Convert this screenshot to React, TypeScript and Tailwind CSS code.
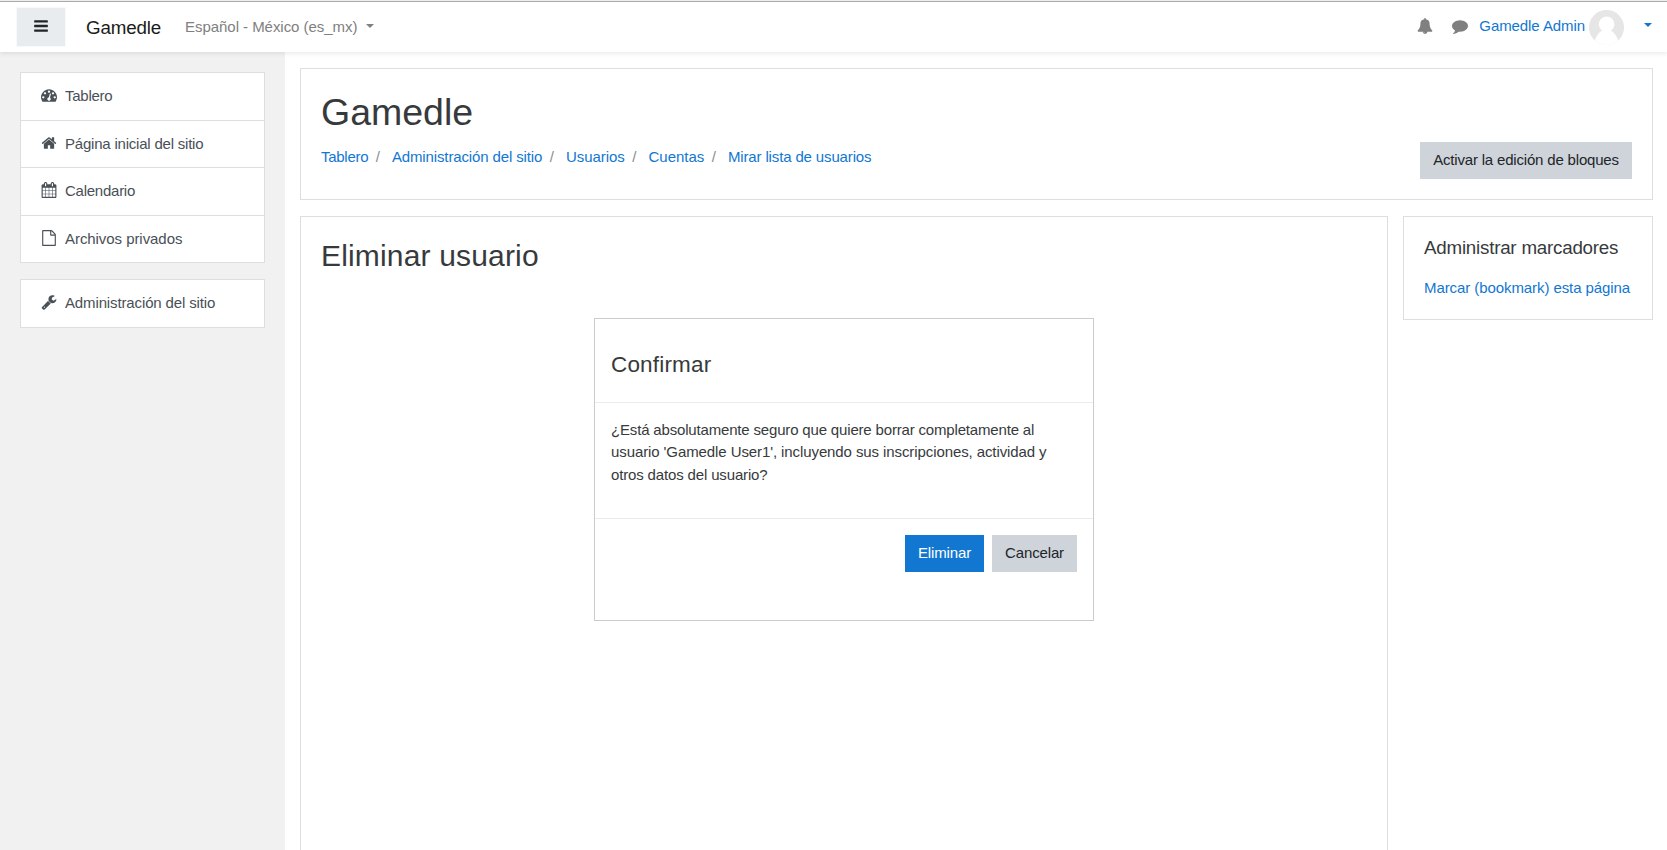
import React from "react";

const ICONS = {
  bars: "M1664 1344v128q0 26-19 45t-45 19h-1408q-26 0-45-19t-19-45v-128q0-26 19-45t45-19h1408q26 0 45 19t19 45zm0-512v128q0 26-19 45t-45 19h-1408q-26 0-45-19t-19-45v-128q0-26 19-45t45-19h1408q26 0 45 19t19 45zm0-512v128q0 26-19 45t-45 19h-1408q-26 0-45-19t-19-45v-128q0-26 19-45t45-19h1408q26 0 45 19t19 45z",
  dashboard:
    "M384 1152q0-53-37.5-90.5t-90.5-37.5-90.5 37.5-37.5 90.5 37.5 90.5 90.5 37.5 90.5-37.5 37.5-90.5zm192-448q0-53-37.5-90.5t-90.5-37.5-90.5 37.5-37.5 90.5 37.5 90.5 90.5 37.5 90.5-37.5 37.5-90.5zm428 481l101-382q6-26-7.5-48.5t-38.5-29.5-48 6.5-30 39.5l-101 382q-60 5-107 43.5t-63 98.5q-20 77 20 146t117 89 146-20 89-117q16-60-6-117t-72-91zm660-33q0-53-37.5-90.5t-90.5-37.5-90.5 37.5-37.5 90.5 37.5 90.5 90.5 37.5 90.5-37.5 37.5-90.5zm-640-640q0-53-37.5-90.5t-90.5-37.5-90.5 37.5-37.5 90.5 37.5 90.5 90.5 37.5 90.5-37.5 37.5-90.5zm448 192q0-53-37.5-90.5t-90.5-37.5-90.5 37.5-37.5 90.5 37.5 90.5 90.5 37.5 90.5-37.5 37.5-90.5zm320 448q0 261-141 483-19 29-54 29h-1402q-35 0-54-29-141-221-141-483 0-182 71-348t191-286 286-191 348-71 348 71 286 191 191 286 71 348z",
  home: "M1472 992v480q0 26-19 45t-45 19h-384v-384h-256v384h-384q-26 0-45-19t-19-45v-480q0-1 .5-3t.5-3l575-474 575 474q1 2 1 6zm223-69l-62 74q-8 9-21 11h-3q-13 0-21-7l-692-577-692 577q-12 8-24 7-13-2-21-11l-62-74q-8-10-7-23.5t11-21.5l719-599q32-26 76-26t76 26l244 204v-195q0-14 9-23t23-9h192q14 0 23 9t9 23v408l219 182q10 8 11 21.5t-7 23.5z",
  calendar:
    "M192 1664h288v-288h-288v288zm352 0h320v-288h-320v288zm-352-352h288v-320h-288v320zm352 0h320v-320h-320v320zm-352-384h288v-288h-288v288zm736 736h320v-288h-320v288zm-384-736h320v-288h-320v288zm768 736h288v-288h-288v288zm-384-352h320v-320h-320v320zm-352-864v-288q0-13-9.500-22.500t-22.500-9.500h-64q-13 0-22.500 9.500t-9.500 22.500v288q0 13 9.500 22.500t22.500 9.500h64q13 0 22.500-9.500t9.500-22.500zm736 864h288v-320h-288v320zm-384-384h320v-288h-320v288zm384 0h288v-288h-288v288zm32-480v-288q0-13-9.500-22.500t-22.500-9.500h-64q-13 0-22.500 9.500t-9.500 22.500v288q0 13 9.500 22.500t22.500 9.500h64q13 0 22.500-9.500t9.500-22.500zm384-64v1280q0 52-38 90t-90 38h-1408q-52 0-90-38t-38-90v-1280q0-52 38-90t90-38h128v-96q0-66 47-113t113-47h64q66 0 113 47t47 113v96h384v-96q0-66 47-113t113-47h64q66 0 113 47t47 113v96h128q52 0 90 38t38 90z",
  file: "M1596 380q28 28 48 76t20 88v1152q0 40-28 68t-68 28h-1344q-40 0-68-28t-28-68v-1600q0-40 28-68t68-28h896q40 0 88 20t76 48zm-444-244v376h376q-10-29-22-41l-313-313q-12-12-41-22zm384 1528v-1024h-416q-40 0-68-28t-28-68v-416h-768v1536h1280z",
  wrench:
    "M448 1472q0-26-19-45t-45-19-45 19-19 45 19 45 45 19 45-19 19-45zm644-420l-682 682q-37 37-90 37-52 0-91-37l-106-108q-38-36-38-90 0-53 38-91l681-681q39 98 114.5 173.5t173.5 114.5zm634-435q0 39-23 106-47 134-164.5 217.5t-258.5 83.5q-185 0-316.5-131.5t-131.5-316.500 131.500-316.500 316.500-131.500q58 0 121.500 16.500t107.500 46.500q16 11 16 28t-16 28l-293 169v224l193 107q5-3 79-48.500t135.500-81 70.500-35.500q15 0 23.500 10t8.500 25z",
  bell: "M912 1696q0-16-16-16-59 0-101.500-42.500t-42.500-101.500q0-16-16-16t-16 16q0 73 51.500 124.500t124.500 51.500q16 0 16-16zm816-288q0 52-38 90t-90 38h-448q0 106-75 181t-181 75-181-75-75-181h-448q-52 0-90-38t-38-90q50-42 91-88t85-119.500 74.500-158.500 50-206 19.500-260q0-152 117-282.500t307-158.500q-8-19-8-39 0-40 28-68t68-28 68 28 28 68q0 20-8 39 190 28 307 158.500t117 282.500q0 139 19.500 260t50 206 74.500 158.500 85 119.500 91 88z",
  comment:
    "M1792 896q0 174-120 321.500t-326 233-450 85.500q-70 0-145-8-198 175-460 242-49 14-114 22-17 2-30.500-9t-17.500-29v-1q-3-4-.5-12t2-10 4.500-9.500l6-9 7-8.500 8-9q7-8 31-34.500t34.500-38 31-39.500 32.500-51 27-59 26-76q-157-89-247.500-220t-90.500-281q0-130 71-248.500t191-204.500 286-136.500 348-50.500 348 50.500 286 136.500 191 204.500 71 248.500z",
};

type IconName = keyof typeof ICONS;

function Icon({ name, className = "" }: { name: IconName; className?: string }) {
  return (
    <svg viewBox="0 0 1792 1792" className={`size-4 shrink-0 fill-current ${className}`} aria-hidden="true">
      <path d={ICONS[name]} />
    </svg>
  );
}

function Caret({ className = "" }: { className?: string }) {
  return (
    <span
      className={`inline-block h-0 w-0 border-x-[4px] border-t-[4px] border-x-transparent border-t-current ${className}`}
    />
  );
}

function Avatar() {
  return (
    <svg viewBox="0 0 35 35" className="size-[35px] shrink-0" aria-hidden="true">
      <defs>
        <clipPath id="avatar-circle">
          <circle cx="17.5" cy="17.5" r="17.5" />
        </clipPath>
      </defs>
      <g clipPath="url(#avatar-circle)">
        <rect width="35" height="35" fill="#e6e6e6" />
        <circle cx="17.6" cy="14.3" r="7.8" fill="#fff" />
        <path d="M5.500 35V31.500C6.800 26.500 9.500 22.700 13 20.500H22C25.500 22.700 28.200 26.500 29.500 31.500V35Z" fill="#fff" />
      </g>
    </svg>
  );
}

interface NavItemProps {
  icon: IconName;
  label: string;
  height: string;
  tracking: string;
}

function NavItem({ icon, label, height, tracking }: NavItemProps) {
  return (
    <a href="#" className={`flex items-center border-t border-[#dedede] bg-white pl-5 text-[#495057] ${height}`}>
      <Icon name={icon} className="mb-[3px]" />
      <span className={`ml-2 ${tracking}`}>{label}</span>
    </a>
  );
}

const CRUMBS = [
  { label: "Tablero", tracking: "tracking-[-0.28px]" },
  { label: "Administración del sitio", tracking: "tracking-[-0.13px]" },
  { label: "Usuarios", tracking: "tracking-[-0.03px]" },
  { label: "Cuentas", tracking: "tracking-[-0.02px]" },
  { label: "Mirar lista de usuarios", tracking: "tracking-[-0.14px]" },
];

export default function App() {
  return (
    <div className="flex h-[850px] w-[1667px] flex-col overflow-hidden bg-white font-['Liberation_Sans',Arial,sans-serif] text-[15px] leading-[22.5px] text-[#373a3c]">
      <header className="z-10 flex h-[52px] shrink-0 items-start border-t border-[#eeeeee] bg-white shadow-[0_2px_4px_rgba(0,0,0,0.08)]">
        <div className="flex h-[51px] w-full items-start border-t border-[#aaaaaa]">
          <button className="ml-[17px] mt-[6px] flex h-[38px] w-[48px] items-center justify-center bg-[#e9ecef] text-[#212529] ring-1 ring-[#f8f9fa]">
            <Icon name="bars" className="mb-[3px]" />
          </button>
          <a href="#" className="ml-[21px] mt-[12px] w-[76px] text-[18.75px] leading-[28px] tracking-[-0.14px] text-[#1b1b1b]">
            Gamedle
          </a>
          <div className="ml-[23px] mt-[14px] flex items-center text-[#808080]">
            <span className="w-[173px] whitespace-nowrap tracking-[-0.04px]">Español - México (es_mx)</span>
            <Caret className="mb-[3px] ml-2" />
          </div>
          <div className="ml-auto mt-2 flex items-center text-[#808080]">
            <Icon name="bell" className="mb-[3px]" />
            <Icon name="comment" className="mb-[3px] ml-[19px]" />
            <a href="#" className="mb-[2px] ml-[11.500px] tracking-[-0.08px] text-[#1177d1]">
              Gamedle Admin
            </a>
            <span className="ml-1">
              <Avatar />
            </span>
            <Caret className="mb-[5px] ml-[20px] mr-[15px] text-[#1177d1]" />
          </div>
        </div>
      </header>

      <div className="flex min-h-0 flex-1">
        <aside className="w-[285px] shrink-0 bg-[#f1f1f1] pl-5 pt-5">
          <nav className="w-[245px] border border-t-0 border-[#dedede]">
            <NavItem icon="dashboard" label="Tablero" height="h-[48px]" tracking="tracking-[-0.26px]" />
            <NavItem icon="home" label="Página inicial del sitio" height="h-[47px]" tracking="tracking-[-0.21px]" />
            <NavItem icon="calendar" label="Calendario" height="h-[48px]" tracking="tracking-[-0.25px]" />
            <NavItem icon="file" label="Archivos privados" height="h-[47px]" tracking="tracking-[-0.06px]" />
          </nav>
          <nav className="mt-4 w-[245px] border border-t-0 border-[#dedede]">
            <NavItem icon="wrench" label="Administración del sitio" height="h-[48px]" tracking="tracking-[-0.13px]" />
          </nav>
        </aside>

        <main className="flex min-w-0 flex-1 flex-col pl-[15px] pr-[14px] pt-4">
          <section className="flex h-[132px] w-full shrink-0 justify-between border border-[#dedede] px-5">
            <div className="pt-[21px]">
              <h1 className="text-[37.5px] leading-[45px]">Gamedle</h1>
              <ol className="mt-[11px] flex">
                {CRUMBS.map(({ label, tracking }, i) => (
                  <li key={label} className="flex">
                    {i > 0 && <span className="pl-[7.500px] pr-[12px] text-[#868e96]">/</span>}
                    <a href="#" className={`text-[#1177d1] ${tracking}`}>
                      {label}
                    </a>
                  </li>
                ))}
              </ol>
            </div>
            <button className="mt-[73px] h-[37px] w-[212px] whitespace-nowrap bg-[#ced4da] tracking-[-0.18px] text-[#212529]">
              Activar la edición de bloques
            </button>
          </section>

          <div className="mt-4 flex min-h-0 flex-1 items-start justify-between">
            <section className="h-full w-[1088px] border border-b-0 border-[#dedede] px-5 pt-[21px]">
              <h2 className="text-[30px] leading-[36px] tracking-[0.17px]">Eliminar usuario</h2>
              <div className="ml-[273px] mt-[44px] flex h-[303px] w-[500px] flex-col border border-[#cccccc]">
                <div className="h-[84px] shrink-0 border-b border-[#e9ecef] px-4 pt-8">
                  <h4 className="text-[22.5px] leading-[27px] tracking-[0.18px]">Confirmar</h4>
                </div>
                <div className="h-[116px] shrink-0 border-b border-[#e9ecef] px-4 pt-4">
                  <p className="whitespace-nowrap">
                    <span className="block h-[22px] tracking-[-0.17px]">
                      ¿Está absolutamente seguro que quiere borrar completamente al
                    </span>
                    <span className="block h-[23px] tracking-[-0.095px]">
                      usuario 'Gamedle User1', incluyendo sus inscripciones, actividad y
                    </span>
                    <span className="block tracking-[-0.15px]">otros datos del usuario?</span>
                  </p>
                </div>
                <div className="flex justify-end gap-2 px-4 pt-4">
                  <button className="h-[37px] w-[79px] bg-[#1177d1] tracking-[-0.14px] text-white">Eliminar</button>
                  <button className="h-[37px] w-[85px] bg-[#ced4da] tracking-[-0.13px] text-[#212529]">Cancelar</button>
                </div>
              </div>
            </section>

            <section className="h-[104px] w-[250px] border border-[#dedede] pl-5 pt-5">
              <h5 className="whitespace-nowrap text-[18.75px] leading-[22.5px] tracking-[-0.22px]">
                Administrar marcadores
              </h5>
              <a href="#" className="mt-[17px] block whitespace-nowrap tracking-[-0.08px] text-[#1177d1]">
                Marcar (bookmark) esta página
              </a>
            </section>
          </div>
        </main>
      </div>
    </div>
  );
}
